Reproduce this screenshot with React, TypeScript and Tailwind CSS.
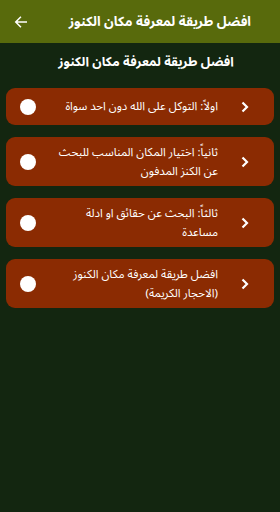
import React from "react";

const items = [
  ["اولاً: التوكل على الله دون احد سواة"],
  ["ثانياً: اختيار المكان المناسب للبحث", "عن الكنز المدفون"],
  ["ثالثاً: البحث عن حقائق او ادلة", "مساعدة"],
  ["افضل طريقة لمعرفة مكان الكنوز", "(الاحجار الكريمة)"],
];

export default function App() {
  return (
    <div
      className="w-[280px] h-[512px] bg-[#132610] flex flex-col"
      style={{ fontFamily: '"Noto Sans Arabic", "Noto Naskh Arabic", "Droid Arabic Naskh", "Noto Sans", sans-serif' }}
    >
      <div className="h-[43px] bg-[#586a0c] flex items-center pl-[14px] shrink-0">
        <svg width="14" height="14" viewBox="0 0 24 24" fill="none" stroke="white" strokeWidth="2.6" strokeLinecap="square">
          <path d="M21 12H4M11 4l-8 8 8 8" />
        </svg>
        <div dir="rtl" className="flex-1 text-right text-white font-bold text-[13.3px] leading-[20px] pr-[29px]">
          افضل طريقة لمعرفة مكان الكنوز
        </div>
      </div>
      <div dir="rtl" className="h-[37px] flex items-center justify-center text-white font-bold text-[12.8px] leading-[20px] pl-[12px]">
        افضل طريقة لمعرفة مكان الكنوز
      </div>
      <div className="flex flex-col gap-[12px] px-[6px] pt-[8px]">
        {items.map((lines, i) => (
          <div
            key={i}
            className={`bg-[#8b2b02] rounded-[9px] flex items-center pl-[14px] pr-[24px] ${lines.length > 1 ? "h-[49px]" : "h-[37px]"}`}
          >
            <div className="w-[16px] h-[16px] rounded-full bg-white shrink-0" />
            <div dir="rtl" className="flex-1 text-right text-white text-[11.5px] leading-[19px] pl-[6px] pr-[2px]">
              {lines.map((l, j) => (
                <div key={j}>{l}</div>
              ))}
            </div>
            <svg width="10" height="12" viewBox="0 0 10 12" fill="none" stroke="white" strokeWidth="2.2" className="ml-[20px] shrink-0">
              <path d="M2.5 1.5l4.5 4.5-4.5 4.5" />
            </svg>
          </div>
        ))}
      </div>
    </div>
  );
}
